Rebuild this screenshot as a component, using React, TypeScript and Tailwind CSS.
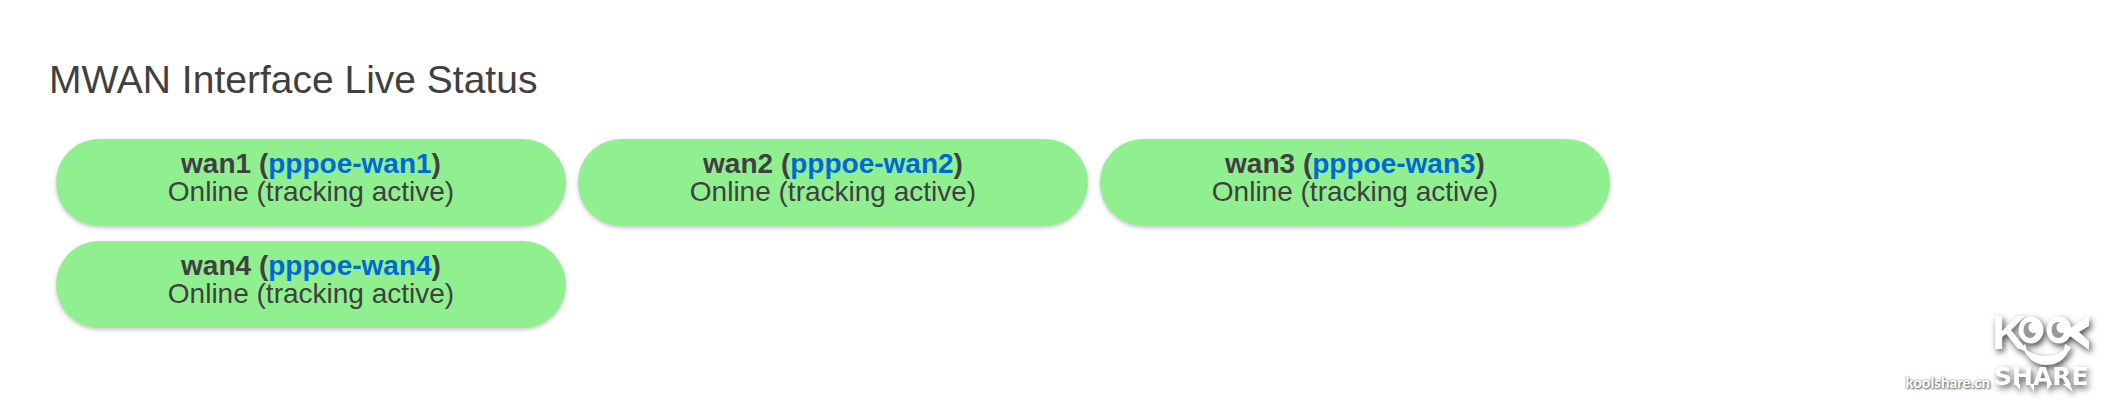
const interfaces = ["wan1", "wan2", "wan3", "wan4"];

function StatusPill({ name }: { name: string }) {
  return (
    <li className="w-[510px] max-w-full rounded-[44px] bg-[#90f090] px-6 pt-[11px] pb-5 text-center text-[28px] leading-[28px] text-[#404040] shadow-[0_2px_4px_rgba(0,0,0,0.22)]">
      <strong className="block font-bold">
        {name} (
        <a href={`#${name}`} className="text-[#0069d6]">
          pppoe-{name}
        </a>
        )
      </strong>
      Online (tracking active)
    </li>
  );
}

function Eye({ cx }: { cx: number }) {
  return (
    <>
      <ellipse cx={cx} cy="30" rx="12.5" ry="13.5" fill="#fff" />
      <ellipse cx={cx - 1} cy="30" rx="6.5" ry="8" fill="#999" />
      <circle cx={cx + 3} cy="27.5" r="5.5" fill="#fff" />
    </>
  );
}

function Watermark() {
  return (
    <div className="flex items-end text-white">
      <span className="pb-[14px] font-['Lato',sans-serif] text-[15px] leading-5 font-black [text-shadow:1px_1px_2px_#666,0_0_2px_#777]">
        koolshare.cn
      </span>
      <svg
        width="116"
        height="106"
        viewBox="0 0 116 106"
        role="img"
        aria-label="Kool Share"
        className="shrink-0 drop-shadow-[2px_3px_3px_rgba(0,0,0,0.7)]"
      >
        <g fill="#fff">
          <text x="2" y="49" fontSize="48" fontWeight="700" fontFamily="'Liberation Sans Narrow', 'Liberation Sans', sans-serif">K</text>
          <path d="M77 30L99 16V26L89 32L99 41V50L77 34Z" />
          <Eye cx={41} />
          <Eye cx={69} />
          <path d="M30 49L35 44L37 50C48 58 64 58 74 50L75 44L81 47L79 51C77 51 75 65 56 65C40 65 35 51 34 51Z" />
          <text x="4" y="85" fontSize="25" fontWeight="700" fontFamily="'DejaVu Sans', sans-serif">SHARE</text>
          <path d="M25 84H30V90ZM39 84H44V92ZM57 84H62L57 90ZM73 84H80L83 92Z" />
        </g>
      </svg>
    </div>
  );
}

export default function App() {
  return (
    <main className="bg-white pt-[60px] pl-[49px] font-['Liberation_Sans',Arial,sans-serif]">
      <h1 className="text-[39px] leading-[40px] text-[#404040]">MWAN Interface Live Status</h1>
      <ul className="mt-[39px] ml-[7px] flex max-w-[1560px] flex-wrap gap-x-3 gap-y-[15px]">
        {interfaces.map((name) => (
          <StatusPill key={name} name={name} />
        ))}
      </ul>
      <footer className="-mt-7 flex justify-end">
        <Watermark />
      </footer>
    </main>
  );
}
